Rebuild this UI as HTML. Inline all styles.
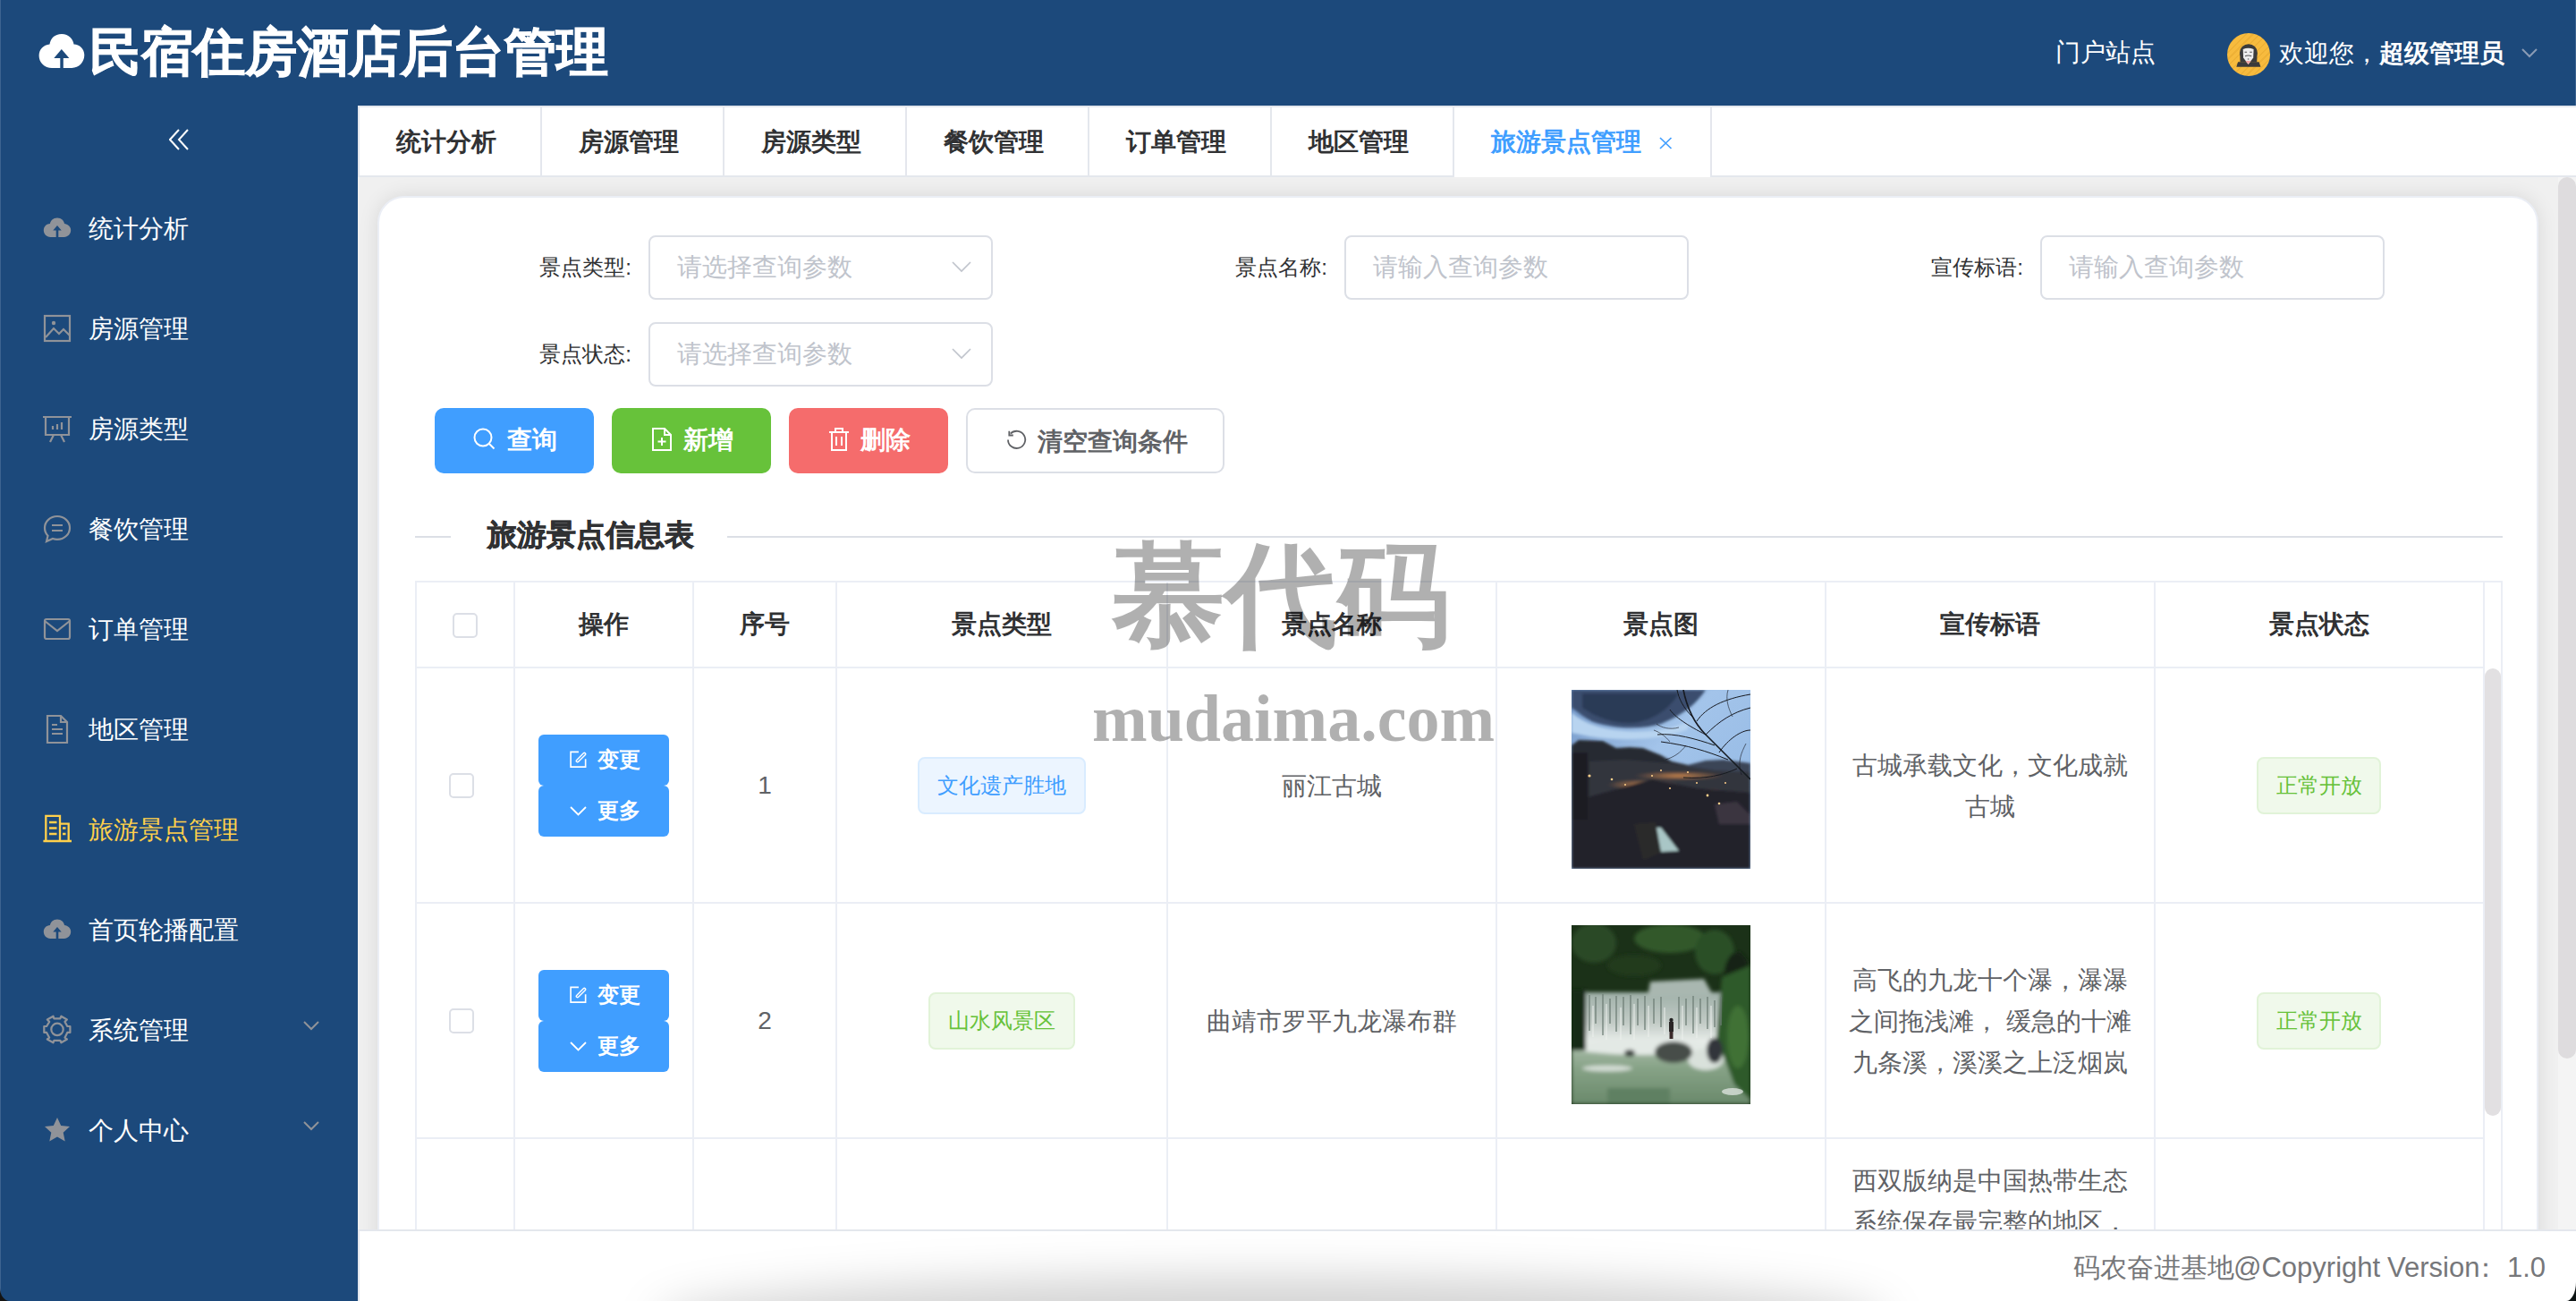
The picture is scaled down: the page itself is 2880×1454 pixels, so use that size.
<!DOCTYPE html><html><head><meta charset="utf-8"><style>
*{box-sizing:border-box;margin:0;padding:0}
html,body{width:2880px;height:1454px;overflow:hidden;background:#fff;font-family:"Liberation Sans",sans-serif;}
.abs{position:absolute}
.nw{white-space:nowrap}
#hdr{position:absolute;left:0;top:0;width:2880px;height:118px;background:#1c497b}
#side{position:absolute;left:0;top:118px;width:400px;height:1336px;background:#1c497b}
#title{position:absolute;left:100px;top:23px;font-size:58px;line-height:70px;font-weight:bold;color:#fff;white-space:nowrap;-webkit-text-stroke:1px #fff}
.hr{position:absolute;color:#fff;font-size:28px;line-height:40px;white-space:nowrap}
.mtx{position:absolute;left:99px;font-size:28px;line-height:40px;color:#fff;white-space:nowrap}
#tabs{position:absolute;left:400px;top:118px;width:2480px;height:80px;background:#fff}
.tab{position:absolute;top:21px;font-size:28px;line-height:40px;font-weight:bold;color:#303133;white-space:nowrap}
#main{position:absolute;left:400px;top:198px;width:2480px;height:1176px;background:#f0f0f0;overflow:hidden}
#card{position:absolute;left:22px;top:21px;width:2416px;height:1300px;background:#fff;border:2px solid #ebeef5;border-radius:30px;box-shadow:0 0 22px rgba(0,0,0,.10)}
.lbl{position:absolute;font-size:24px;line-height:40px;color:#303133;white-space:nowrap}
.inp{position:absolute;height:72px;border:2px solid #dcdfe6;border-radius:8px;background:#fff}
.ph{position:absolute;left:30px;top:14px;font-size:28px;line-height:40px;color:#c0c4cc;white-space:nowrap}
.btn{position:absolute;height:73px;border-radius:10px;color:#fff;font-size:28px;font-weight:bold;white-space:nowrap}
.btn .t{position:absolute;top:16px;line-height:40px}
.vl{position:absolute;width:2px;background:#ebeef5}
.hl{position:absolute;height:2px;background:#ebeef5}
.th{position:absolute;font-size:28px;line-height:40px;font-weight:bold;color:#303133;white-space:nowrap}
.cb{position:absolute;width:28px;height:28px;border:2px solid #dcdfe6;border-radius:5px;background:#fff}
.ob{position:absolute;width:146px;height:57px;background:#409eff;border-radius:6px;color:#fff;font-size:24px;font-weight:bold;white-space:nowrap}
.ob .t{position:absolute;left:66px;top:9px;line-height:38px}
.cell{position:absolute;font-size:28px;line-height:46px;color:#606266;white-space:nowrap;text-align:center}
.tag{position:absolute;height:64px;border-radius:8px;font-size:24px;line-height:60px;text-align:center;white-space:nowrap}
.tag.b{background:#ecf5ff;border:2px solid #d9ecff;color:#409eff}
.tag.g{background:#f0f9eb;border:2px solid #e1f3d8;color:#67c23a}
.wm{position:absolute;font-family:"Liberation Serif",serif;font-weight:bold;color:rgba(0,0,0,.31);white-space:nowrap}
</style></head><body>
<div id="hdr">
<svg class="abs" style="left:43px;top:37px" width="52" height="40" viewBox="0 0 52 40"><path fill="#fff" d="M26 1c8 0 13 6 13.5 11.5C46 12.5 51.3 17.5 51.3 24.5c0 8-6 14.4-14 14.4H27.8V28h6.6L25.8 17.9 17.3 28h7V38.9H15C7 38.9.6 33 .6 25.2c0-7 5-12.2 11.9-12.7C13.5 6 18 1 26 1z"/></svg>
<div id="title">民宿住房酒店后台管理</div>
<div class="hr" style="left:2298px;top:39px">门户站点</div>
<div class="abs" style="left:2490px;top:37px;width:48px;height:48px;border-radius:50%;overflow:hidden;background:repeating-linear-gradient(135deg,#f7bb3e 0 4px,#eeb136 4px 5.5px)"><svg width="48" height="48" viewBox="0 0 48 48"><ellipse cx="23.9" cy="21.8" rx="9.9" ry="9.6" fill="#3b3b3b"/><polygon points="10.3,37.7 37.5,37.7 35.6,32.2 12.1,32.2" fill="#3b3b3b"/><polygon points="14.2,22 33.6,22 33.2,32.5 14.6,32.5" fill="#3b3b3b"/><path d="M17.7 18Q23.6 15.5 29.6 18L29.2 27.5 23.6 35 18.1 27.5z" fill="#ededed"/><polygon points="20.6,31 26.6,31 23.6,35" fill="#f1a5a5"/><path d="M19.5 21.3h2.6M25.2 21.3h2.6M20 25.8q3.6-1.6 7.2 0" stroke="#555" stroke-width="1.1" fill="none"/><circle cx="23.6" cy="29" r=".8" fill="#666"/></svg></div>
<div class="hr" style="left:2548px;top:40px">欢迎您，<b>超级管理员</b></div>
<svg class="abs" style="left:2819px;top:54px" width="18" height="12" viewBox="0 0 18 12"><path d="M1 1l8 8 8-8" fill="none" stroke="#8a9bb5" stroke-width="2"/></svg>
</div>
<div id="side">
<svg class="abs" style="left:189px;top:26px" width="22" height="24" viewBox="0 0 22 24"><path d="M11 1L1 12l10 11M21 1L11 12l10 11" fill="none" stroke="#fff" stroke-width="2"/></svg>
<svg class="abs" style="left:48px;top:121px;overflow:visible" width="32" height="32" viewBox="0 0 32 32"><path fill="#909399" d="M16 4.5c4.6 0 7.6 3.2 8 6.6 3.9.5 7.2 3.3 7.2 7.2 0 4.2-3.3 7.7-7.5 7.7H17.3v-7.5h3.4L16 13l-4.7 5.5h3.4V26H8.3C4 26 .8 22.5.8 18.3c0-3.9 3-7 7.2-7.2.4-3.4 3.4-6.6 8-6.6z"/></svg>
<div class="mtx" style="top:118px;color:#fff">统计分析</div>
<svg class="abs" style="left:48px;top:233px;overflow:visible" width="32" height="32" viewBox="0 0 32 32"><g fill="none" stroke="#909399" stroke-width="2.2"><rect x="2" y="2" width="28" height="28"/><path d="M3 26l9-10 6 6 5-5 7 7"/></g><circle cx="12" cy="10" r="2.2" fill="#909399"/></svg>
<div class="mtx" style="top:230px;color:#fff">房源管理</div>
<svg class="abs" style="left:48px;top:345px;overflow:visible" width="32" height="32" viewBox="0 0 32 32"><g fill="none" stroke="#909399" stroke-width="2.2"><path d="M0 3h32M3 3v20h26V3M12 23l-4 8M20 23l4 8"/><path d="M11 17v-4M16 17v-6M21 17v-8"/></g></svg>
<div class="mtx" style="top:342px;color:#fff">房源类型</div>
<svg class="abs" style="left:48px;top:457px;overflow:visible" width="32" height="32" viewBox="0 0 32 32"><g fill="none" stroke="#909399" stroke-width="2.2"><path d="M16 2C8 2 2 8 2 15c0 3.5 1.3 6.5 3.5 8.8L4 30l7-3c1.6.6 3.3.9 5 .9 8 0 14-6 14-13S24 2 16 2z"/><path d="M10 12h12M10 18h12"/></g></svg>
<div class="mtx" style="top:454px;color:#fff">餐饮管理</div>
<svg class="abs" style="left:48px;top:569px;overflow:visible" width="32" height="32" viewBox="0 0 32 32"><g fill="none" stroke="#909399" stroke-width="2.2"><rect x="2" y="5" width="28" height="22" rx="2"/><path d="M2 7l14 11L30 7"/></g></svg>
<div class="mtx" style="top:566px;color:#fff">订单管理</div>
<svg class="abs" style="left:48px;top:681px;overflow:visible" width="32" height="32" viewBox="0 0 32 32"><g fill="none" stroke="#909399" stroke-width="2.2"><path d="M5 1h15l7 7v23H5z"/><path d="M20 1v7h7M10 16h12M10 21h12M10 11h6"/></g></svg>
<div class="mtx" style="top:678px;color:#fff">地区管理</div>
<svg class="abs" style="left:48px;top:793px;overflow:visible" width="32" height="32" viewBox="0 0 32 32"><g fill="none" stroke="#ffd04b" stroke-width="2.3" transform="translate(-1,-2)"><path d="M1.4 31H33M4.3 31V2.8H20V31M20 11.7H29.7V31M8 10H16.5M8 16.5H16.5M8 23H16.5M23 16.5H26.5M23 23H26.5"/></g></svg>
<div class="mtx" style="top:790px;color:#ffd04b">旅游景点管理</div>
<svg class="abs" style="left:48px;top:905px;overflow:visible" width="32" height="32" viewBox="0 0 32 32"><path fill="#909399" d="M16 4.5c4.6 0 7.6 3.2 8 6.6 3.9.5 7.2 3.3 7.2 7.2 0 4.2-3.3 7.7-7.5 7.7H17.3v-7.5h3.4L16 13l-4.7 5.5h3.4V26H8.3C4 26 .8 22.5.8 18.3c0-3.9 3-7 7.2-7.2.4-3.4 3.4-6.6 8-6.6z"/></svg>
<div class="mtx" style="top:902px;color:#fff">首页轮播配置</div>
<svg class="abs" style="left:48px;top:1017px;overflow:visible" width="32" height="32" viewBox="0 0 32 32"><g fill="none" stroke="#909399" stroke-width="2.2" stroke-linejoin="round"><circle cx="16" cy="15.4" r="6.7"/><path d="M12.4 3.3L11.5 .7 4.8 4.5 7.2 6.9 4.1 12H1.3V18.9H4.1L7.2 24.7 4.8 26.5 11.5 30.3 12.4 27.8H19.3L20.4 30.3 26.9 26.5 24.5 24.7 27.3 18.9H30.4V12H27.3L24.5 6.9 26.9 4.5 20.4 .7 19.3 3.3z"/></g></svg>
<div class="mtx" style="top:1014px;color:#fff">系统管理</div>
<svg class="abs" style="left:339px;top:1023px" width="18" height="12" viewBox="0 0 18 12"><path d="M1 1l8 8 8-8" fill="none" stroke="#909399" stroke-width="2"/></svg>
<svg class="abs" style="left:48px;top:1129px;overflow:visible" width="32" height="32" viewBox="0 0 32 32"><path fill="#909399" d="M16 2l4.2 9 9.8 1.1-7.3 6.6 2 9.7L16 23.5l-8.7 4.9 2-9.7L2 12.1l9.8-1.1z"/></svg>
<div class="mtx" style="top:1126px;color:#fff">个人中心</div>
<svg class="abs" style="left:339px;top:1135px" width="18" height="12" viewBox="0 0 18 12"><path d="M1 1l8 8 8-8" fill="none" stroke="#909399" stroke-width="2"/></svg>
</div>
<div id="tabs">
<div class="abs" style="left:0;top:0;width:2480px;height:2px;background:#e4e7ed"></div>
<div class="abs" style="left:0;top:78px;width:1226px;height:2px;background:#e4e7ed"></div>
<div class="abs" style="left:1512px;top:78px;width:968px;height:2px;background:#e4e7ed"></div>
<div class="abs" style="left:0;top:0;width:2px;height:80px;background:#e4e7ed"></div>
<div class="tab" style="left:43px">统计分析</div>
<div class="abs" style="left:204px;top:0;width:2px;height:80px;background:#e4e7ed"></div>
<div class="tab" style="left:247px">房源管理</div>
<div class="abs" style="left:408px;top:0;width:2px;height:80px;background:#e4e7ed"></div>
<div class="tab" style="left:451px">房源类型</div>
<div class="abs" style="left:612px;top:0;width:2px;height:80px;background:#e4e7ed"></div>
<div class="tab" style="left:655px">餐饮管理</div>
<div class="abs" style="left:816px;top:0;width:2px;height:80px;background:#e4e7ed"></div>
<div class="tab" style="left:859px">订单管理</div>
<div class="abs" style="left:1020px;top:0;width:2px;height:80px;background:#e4e7ed"></div>
<div class="tab" style="left:1063px">地区管理</div>
<div class="abs" style="left:1224px;top:0;width:2px;height:80px;background:#e4e7ed"></div>
<div class="tab" style="left:1267px;color:#409eff">旅游景点管理</div>
<svg class="abs" style="left:1455px;top:35px" width="15" height="14" viewBox="0 0 15 14"><path d="M1 1l12.5 12M13.5 1L1 13" stroke="#409eff" stroke-width="1.7"/></svg>
<div class="abs" style="left:1512px;top:0;width:2px;height:80px;background:#e4e7ed;border-top-right-radius:4px"></div>
</div>
<div id="main">
<div class="abs" style="left:2460px;top:0;width:20px;height:1176px;background:#f4f4f4"></div>
<div class="abs" style="left:2460px;top:0;width:20px;height:985px;border-radius:10px;background:#dedcde"></div>
<div id="card">
<div class="lbl" style="right:2130px;top:58px">景点类型:</div>
<div class="inp" style="left:301px;top:42px;width:385px"><div class="ph">请选择查询参数</div><svg class="abs" style="right:22px;top:27px" width="22" height="13" viewBox="0 0 22 13"><path d="M1 1l10 10 10-10" fill="none" stroke="#c0c4cc" stroke-width="1.7"/></svg></div>
<div class="lbl" style="right:1352px;top:58px">景点名称:</div>
<div class="inp" style="left:1079px;top:42px;width:385px"><div class="ph">请输入查询参数</div></div>
<div class="lbl" style="right:574px;top:58px">宣传标语:</div>
<div class="inp" style="left:1857px;top:42px;width:385px"><div class="ph">请输入查询参数</div></div>
<div class="lbl" style="right:2130px;top:155px">景点状态:</div>
<div class="inp" style="left:301px;top:139px;width:385px"><div class="ph">请选择查询参数</div><svg class="abs" style="right:22px;top:27px" width="22" height="13" viewBox="0 0 22 13"><path d="M1 1l10 10 10-10" fill="none" stroke="#c0c4cc" stroke-width="1.7"/></svg></div>
<div class="btn" style="left:62px;top:235px;width:178px;background:#409eff;color:#fff"><svg class="abs" style="left:43px;top:22px" width="26" height="26" viewBox="0 0 26 26"><circle cx="11" cy="11" r="9.5" fill="none" stroke="#fff" stroke-width="2"/><path d="M18 18l5.5 5.5" stroke="#fff" stroke-width="2"/></svg><div class="t" style="left:81px">查询</div></div>
<div class="btn" style="left:260px;top:235px;width:178px;background:#67c23a;color:#fff"><svg class="abs" style="left:45px;top:22px" width="22" height="26" viewBox="0 0 22 26"><path d="M1 1h13l7 7v17H1z" fill="none" stroke="#fff" stroke-width="2"/><path d="M14 1v7h7M11 11v9M6.5 15.5h9" fill="none" stroke="#fff" stroke-width="2"/></svg><div class="t" style="left:80px">新增</div></div>
<div class="btn" style="left:458px;top:235px;width:178px;background:#f56c6c;color:#fff"><svg class="abs" style="left:44px;top:22px" width="24" height="26" viewBox="0 0 24 26"><path d="M1 5h22M8 5V1h8v4M4 5v20h16V5M9 10v10M15 10v10" fill="none" stroke="#fff" stroke-width="2"/></svg><div class="t" style="left:80px">删除</div></div>
<div class="btn" style="left:656px;top:235px;width:289px;background:#fff;color:#606266;border:2px solid #dcdfe6"><svg class="abs" style="left:40px;top:19px" width="30" height="30" viewBox="0 0 30 30"><path d="M5 14.4A9.6 9.6 0 1 0 7.7 7.7" fill="none" stroke="#606266" stroke-width="1.8"/><path d="M6.3 4.8V9.5H10.8" fill="none" stroke="#606266" stroke-width="1.8"/></svg><div class="t" style="left:78px">清空查询条件</div></div>
<div class="hl" style="left:40px;top:378px;width:40px;background:#dcdfe6"></div>
<div class="hl" style="left:389px;top:378px;width:1985px;background:#dcdfe6"></div>
<div class="abs nw" style="left:121px;top:357px;font-size:32.5px;line-height:40px;font-weight:bold;color:#303133;-webkit-text-stroke:0.7px #303133">旅游景点信息表</div>
<div class="vl" style="left:40px;top:428px;height:751px"></div>
<div class="vl" style="left:150px;top:428px;height:751px"></div>
<div class="vl" style="left:350px;top:428px;height:751px"></div>
<div class="vl" style="left:510px;top:428px;height:751px"></div>
<div class="vl" style="left:880px;top:428px;height:751px"></div>
<div class="vl" style="left:1248px;top:428px;height:751px"></div>
<div class="vl" style="left:1616px;top:428px;height:751px"></div>
<div class="vl" style="left:1984px;top:428px;height:751px"></div>
<div class="vl" style="left:2352px;top:428px;height:751px"></div>
<div class="vl" style="left:2372px;top:428px;height:751px"></div>
<div class="hl" style="left:40px;top:428px;width:2334px"></div>
<div class="hl" style="left:40px;top:524px;width:2314px"></div>
<div class="hl" style="left:40px;top:787px;width:2314px"></div>
<div class="hl" style="left:40px;top:1050px;width:2314px"></div>
<div class="th" style="left:51px;top:457px;width:400px;text-align:center">操作</div>
<div class="th" style="left:231px;top:457px;width:400px;text-align:center">序号</div>
<div class="th" style="left:496px;top:457px;width:400px;text-align:center">景点类型</div>
<div class="th" style="left:865px;top:457px;width:400px;text-align:center">景点名称</div>
<div class="th" style="left:1233px;top:457px;width:400px;text-align:center">景点图</div>
<div class="th" style="left:1601px;top:457px;width:400px;text-align:center">宣传标语</div>
<div class="th" style="left:1969px;top:457px;width:400px;text-align:center">景点状态</div>
<div class="cb" style="left:82px;top:464px"></div>
<div class="cb" style="left:78px;top:643px"></div>
<div class="ob" style="left:178px;top:600px"><svg class="abs" style="left:35px;top:18px" width="19" height="19" viewBox="0 0 21 21"><path d="M11 1.5H1.2V20H19.5V10.2" fill="none" stroke="#fff" stroke-width="1.8"/><path d="M9.6 12.6L18 4.2" stroke="#fff" stroke-width="4.6" stroke-linecap="round"/><path d="M9.6 12.6L18 4.2" stroke="#409eff" stroke-width="1.4" stroke-linecap="round"/></svg><div class="t">变更</div></div>
<div class="ob" style="left:178px;top:657px"><svg class="abs" style="left:35px;top:23px" width="19" height="11" viewBox="0 0 19 11"><path d="M1 1l8.5 8.5 8.5-8.5" fill="none" stroke="#fff" stroke-width="1.8"/></svg><div class="t">更多</div></div>
<div class="cell" style="left:381px;top:634px;width:100px">1</div>
<div class="tag b" style="left:602px;top:625px;width:188px">文化遗产胜地</div>
<div class="cell" style="left:865px;top:635px;width:400px">丽江古城</div>
<div class="abs" style="left:1333px;top:550px;width:200px;height:200px;overflow:hidden"><svg width="200" height="200" viewBox="0 0 200 200"><defs><filter id="b1" x="-10%" y="-10%" width="120%" height="120%"><feGaussianBlur stdDeviation="1.8"/></filter><filter id="b0"><feGaussianBlur stdDeviation="0.45"/></filter><linearGradient id="sky1" x1="0" y1="0" x2="1" y2="1"><stop offset="0" stop-color="#6f93c4"/><stop offset=".4" stop-color="#a3c4ea"/><stop offset="1" stop-color="#8fb6e3"/></linearGradient><radialGradient id="lt1"><stop offset="0" stop-color="#e0904e" stop-opacity=".85"/><stop offset="1" stop-color="#e0904e" stop-opacity="0"/></radialGradient></defs><rect width="200" height="200" fill="url(#sky1)"/><g filter="url(#b1)"><path d="M0 0H150C140 15 125 28 100 38C80 44 50 44 25 36C15 32 8 25 0 20z" fill="#3a4e6e"/><path d="M12 4H120C110 20 95 33 70 37C50 39 30 32 12 20z" fill="#2c3b57"/><path d="M0 25C10 35 30 44 60 46C90 48 110 44 130 36L130 44C100 56 60 58 20 52L0 48z" fill="#b8d4f0"/><polygon points="0,62 8,56 35,57 50,65 65,64 80,65 100,73 112,80 130,84 130,200 0,200" fill="#272a30"/><polygon points="130,84 150,79 170,78 200,82 200,200 130,200" fill="#3a4456"/><polygon points="20,80 60,78 110,82 160,90 200,92 200,130 20,130" fill="#33343c"/><ellipse cx="120" cy="96" rx="50" ry="5" fill="url(#lt1)"/><ellipse cx="80" cy="106" rx="40" ry="6" fill="url(#lt1)"/><ellipse cx="155" cy="118" rx="22" ry="8" fill="url(#lt1)"/><polygon points="0,125 90,100 140,110 200,115 200,200 0,200" fill="#22232a"/><polygon points="0,0 0,0" fill="none"/><rect x="0" y="70" width="18" height="75" fill="#1a1b20"/><polygon points="94,154 100,154 120,180 100,181" fill="#a9c6c6"/><polygon points="70,150 94,148 100,181 80,190" fill="#2c2a2c"/><polygon points="160,128 185,125 200,140 200,150 165,150" fill="#3b3540"/></g><g fill="none" stroke="#171a20" filter="url(#b0)"><path stroke-width="1.6" d="M200 100C185 85 170 70 150 50C140 40 130 25 125 0"/><path stroke-width="1" d="M175 78C150 68 130 62 100 58M160 62C140 55 115 48 96 50M150 50C165 35 180 25 200 20M140 35C150 20 170 10 200 5M150 50C130 40 115 30 110 22M185 88C170 95 150 100 125 98M135 30C125 20 120 10 118 0M165 70C175 55 190 45 200 45"/><path stroke-width="0.6" d="M110 58C105 52 100 48 92 45M128 62C122 70 115 75 105 78M180 30C175 20 172 10 175 0M195 60C190 70 185 80 190 95M120 42C110 45 100 42 95 38"/></g><g fill="#ffcf8a" filter="url(#b0)"><circle cx="20" cy="96" r="1.6"/><circle cx="45" cy="100" r="1.3"/><circle cx="90" cy="96" r="1.1"/><circle cx="130" cy="92" r="1.1"/><circle cx="152" cy="118" r="1.4"/><circle cx="60" cy="106" r="1"/><circle cx="172" cy="104" r="1"/><circle cx="110" cy="110" r="1.1"/><circle cx="140" cy="104" r="1"/><circle cx="165" cy="127" r="1.3"/><circle cx="100" cy="90" r="1"/></g></svg></div>
<div class="cell" style="left:1601px;top:612px;width:400px;white-space:normal">古城承载文化，文化成就<br>古城</div>
<div class="tag g" style="left:2099px;top:625px;width:139px">正常开放</div>
<div class="cb" style="left:78px;top:906px"></div>
<div class="ob" style="left:178px;top:863px"><svg class="abs" style="left:35px;top:18px" width="19" height="19" viewBox="0 0 21 21"><path d="M11 1.5H1.2V20H19.5V10.2" fill="none" stroke="#fff" stroke-width="1.8"/><path d="M9.6 12.6L18 4.2" stroke="#fff" stroke-width="4.6" stroke-linecap="round"/><path d="M9.6 12.6L18 4.2" stroke="#409eff" stroke-width="1.4" stroke-linecap="round"/></svg><div class="t">变更</div></div>
<div class="ob" style="left:178px;top:920px"><svg class="abs" style="left:35px;top:23px" width="19" height="11" viewBox="0 0 19 11"><path d="M1 1l8.5 8.5 8.5-8.5" fill="none" stroke="#fff" stroke-width="1.8"/></svg><div class="t">更多</div></div>
<div class="cell" style="left:381px;top:897px;width:100px">2</div>
<div class="tag g" style="left:614px;top:888px;width:164px">山水风景区</div>
<div class="cell" style="left:865px;top:898px;width:400px">曲靖市罗平九龙瀑布群</div>
<div class="abs" style="left:1333px;top:813px;width:200px;height:200px;overflow:hidden"><svg width="200" height="200" viewBox="0 0 200 200"><defs><filter id="b2" x="-10%" y="-10%" width="120%" height="120%"><feGaussianBlur stdDeviation="2"/></filter><filter id="b3"><feGaussianBlur stdDeviation="0.6"/></filter><linearGradient id="wt2" x1="0" y1="0" x2="0" y2="1"><stop offset="0" stop-color="#aebfae"/><stop offset=".45" stop-color="#86a286"/><stop offset="1" stop-color="#6a896b"/></linearGradient><linearGradient id="wf2" x1="0" y1="0" x2="0" y2="1"><stop offset="0" stop-color="#9fb0a8"/><stop offset=".6" stop-color="#c3ccc7"/><stop offset="1" stop-color="#eef2ef"/></linearGradient></defs><rect width="200" height="200" fill="#1b3118"/><g filter="url(#b2)"><ellipse cx="25" cy="20" rx="25" ry="22" fill="#2a4a25"/><ellipse cx="110" cy="15" rx="40" ry="16" fill="#33592c"/><ellipse cx="70" cy="45" rx="30" ry="12" fill="#203a1d"/><ellipse cx="160" cy="30" rx="22" ry="25" fill="#2c4f28"/><ellipse cx="185" cy="60" rx="15" ry="30" fill="#142414"/><rect x="0" y="128" width="200" height="72" fill="url(#wt2)"/><rect x="15" y="75" width="157" height="58" fill="url(#wf2)"/><polygon points="88,63 148,60 158,78 85,80" fill="#a9b7b0"/><ellipse cx="80" cy="136" rx="78" ry="9" fill="#e3e9e5"/><ellipse cx="40" cy="160" rx="28" ry="3.5" fill="#d2dbd3"/><ellipse cx="150" cy="150" rx="20" ry="12" fill="#d9e1db"/><polygon points="168,58 200,45 200,195 182,178 162,125" fill="#2e5a29"/><ellipse cx="186" cy="125" rx="12" ry="35" fill="#3f7136"/><rect x="0" y="72" width="16" height="68" fill="#182a17"/><ellipse cx="114" cy="142" rx="21" ry="12" fill="#474d4a"/><ellipse cx="160" cy="140" rx="9" ry="14" fill="#30363a"/><ellipse cx="65" cy="143" rx="6" ry="4" fill="#404543"/><rect x="40" y="182" width="70" height="18" fill="#5f8062"/></g><g stroke="#6d7d76" stroke-width="1.5" filter="url(#b3)" opacity=".85"><path d="M20 78v40M27 80v30M35 77v46M43 82v28M50 79v40M58 80v32M66 78v44M74 82v30M82 79v38M92 82v28M100 80v34M120 80v36M128 82v30M136 79v42M144 82v28M152 80v36M160 84v30M167 80v32"/></g><g stroke="#eef2ef" stroke-width="1.2" filter="url(#b3)" opacity=".8"><path d="M24 90v35M39 88v40M55 92v36M70 88v40M86 90v35M104 92v30M124 90v38M140 92v34M156 90v36"/></g><g filter="url(#b3)"><circle cx="111.5" cy="106" r="2.2" fill="#222"/><path d="M109 108h5v11h-5z" fill="#2a2626"/><path d="M109.5 119h4v8h-4z" fill="#3a2a2a"/></g><ellipse cx="180" cy="186" rx="12" ry="4" fill="#e8ecea" opacity=".7"/></svg></div>
<div class="cell" style="left:1601px;top:852px;width:400px;white-space:normal">高飞的九龙十个瀑，瀑瀑<br>之间拖浅滩， 缓急的十滩<br>九条溪，溪溪之上泛烟岚</div>
<div class="tag g" style="left:2099px;top:888px;width:139px">正常开放</div>
<div class="cell" style="left:1601px;top:1076px;width:400px">西双版纳是中国热带生态<br>系统保存最完整的地区，</div>
<div class="abs" style="left:2354px;top:526px;width:18px;height:500px;border-radius:9px;background:#e2e0e2"></div>
<div class="wm" style="left:819px;top:383px;font-size:126px;line-height:126px">慕代码</div>
<div class="wm" style="left:797px;top:545px;font-size:74px;line-height:74px">mudaima.com</div>
</div>
</div>
<div class="abs" style="left:400px;top:1374px;width:2480px;height:80px;background:#fff;border-top:2px solid #e4e7ed;border-left:2px solid #e4e7ed;overflow:hidden">
<div class="abs" style="left:330px;top:50px;width:1380px;height:100px;border-radius:50%;background:rgba(0,0,0,.17);filter:blur(24px)"></div>
<div style="position:absolute;top:21px;font-size:30px;line-height:40px;color:#76777a;white-space:nowrap;left:1916px">码农奋进基地</div>
<div style="position:absolute;top:21px;font-size:30px;line-height:40px;color:#76777a;white-space:nowrap;left:2095px;font-size:31px">@Copyright</div>
<div style="position:absolute;top:21px;font-size:30px;line-height:40px;color:#76777a;white-space:nowrap;left:2267px;font-size:31px">Version</div>
<div style="position:absolute;top:21px;font-size:30px;line-height:40px;color:#76777a;white-space:nowrap;left:2362px">：</div>
<div style="position:absolute;top:21px;font-size:30px;line-height:40px;color:#76777a;white-space:nowrap;left:2401px;font-size:31px">1.0</div>
</div>
<svg class="abs" style="left:2860px;top:1424px" width="20" height="30" viewBox="0 0 20 30"><path d="M20 9A11 21 0 0 1 9 30H20z" fill="#0d1414"/></svg>
<div class="abs" style="left:0;top:0;width:1px;height:1454px;background:#3d6390"></div>
<div class="abs" style="left:2879px;top:0;width:1px;height:118px;background:#3d6390"></div>
<svg class="abs" style="left:0;top:1434px" width="20" height="20" viewBox="0 0 20 20"><path d="M0 5.5A10.8 14.5 0 0 0 10.8 20H0z" fill="#141414"/></svg>
</body></html>
